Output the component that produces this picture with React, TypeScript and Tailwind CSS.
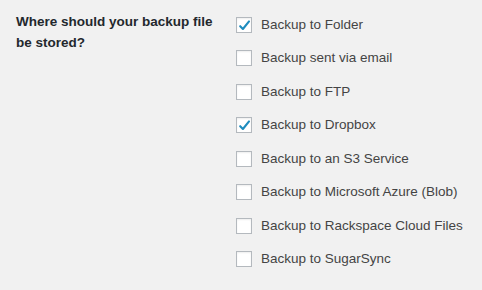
import React from "react";

const options = [
  { label: "Backup to Folder", checked: true },
  { label: "Backup sent via email", checked: false },
  { label: "Backup to FTP", checked: false },
  { label: "Backup to Dropbox", checked: true },
  { label: "Backup to an S3 Service", checked: false },
  { label: "Backup to Microsoft Azure (Blob)", checked: false },
  { label: "Backup to Rackspace Cloud Files", checked: false },
  { label: "Backup to SugarSync", checked: false },
];

const Checkbox = ({ checked }: { checked: boolean }) => (
  <span className="relative flex h-4 w-4 shrink-0 items-center justify-center border border-[#b4b9be] bg-white shadow-[inset_0_1px_2px_rgba(0,0,0,0.07)]">
    {checked && (
      <svg viewBox="0 0 16 16" className="absolute left-[1px] top-[1px] h-[14px] w-[14px]">
        <path
          d="M2.5 8.2 L5.6 11.4 L12.6 2.8"
          fill="none"
          stroke="#1e8cbe"
          strokeWidth="2.4"
          strokeLinecap="round"
          strokeLinejoin="round"
        />
      </svg>
    )}
  </span>
);

export default function App() {
  return (
    <div className="flex h-[290px] w-[482px] bg-[#f1f1f1] font-['Liberation_Sans',sans-serif] text-[13.5px]">
      <div className="w-[236px] shrink-0 pl-4 pr-[10px] pt-[11px] font-bold leading-[21px] text-[#23282d]">
        Where should your backup file be stored?
      </div>
      <div className="flex flex-col pt-2">
        {options.map((o) => (
          <label key={o.label} className="flex h-[33.5px] items-center gap-[9px] text-[#444]">
            <Checkbox checked={o.checked} />
            <span>{o.label}</span>
          </label>
        ))}
      </div>
    </div>
  );
}
